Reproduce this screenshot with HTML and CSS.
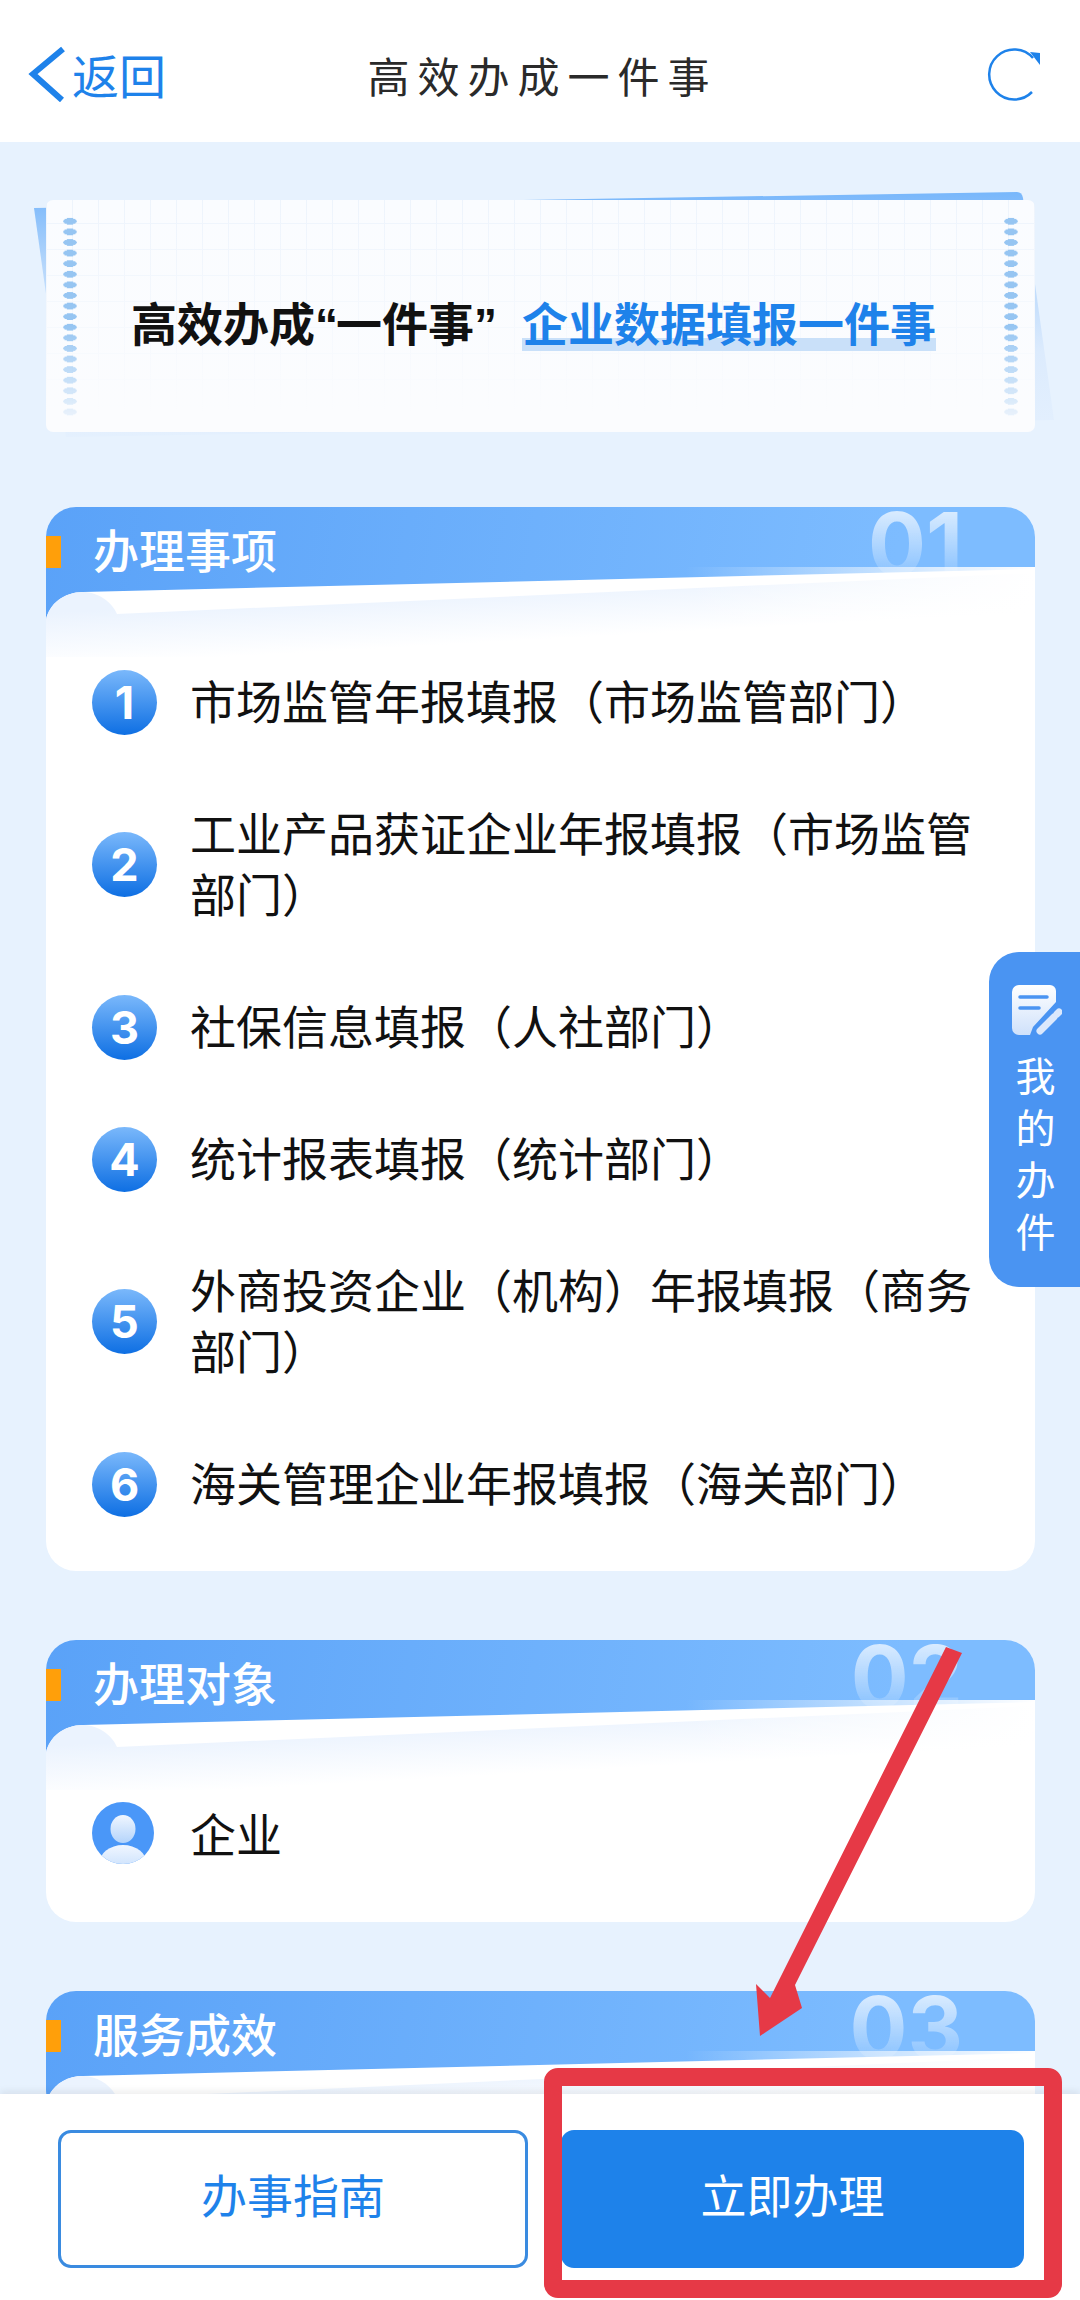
FILE: index.html
```html
<!DOCTYPE html>
<html lang="zh-CN">
<head>
    <meta charset="UTF-8">
    <meta name="viewport" content="width=device-width, initial-scale=1.0">
    <link rel="stylesheet" href="styles.css">
    <title>高效办成一件事</title>
</head>
<body>

    <svg class="sprite" aria-hidden="true">
        <defs>
            <linearGradient id="curlFade" gradientUnits="userSpaceOnUse" x1="500" y1="78" x2="503" y2="132">
                <stop offset="0" stop-color="#ebf3fe"/>
                <stop offset="1" stop-color="#fff"/>
            </linearGradient>
            <linearGradient id="curlRight" x1="0" y1="0" x2="1" y2="0">
                <stop offset="0" stop-color="#fff" stop-opacity="0"/>
                <stop offset="1" stop-color="#fff"/>
            </linearGradient>
            <symbol id="curl" viewBox="0 0 989 150" preserveAspectRatio="none">
                <path d="M0 113C3 97 18 85 37 85L989 62V150H0Z" fill="#fff"/>
                <path d="M71 107C66 95 52 85 37 85C18 85 3 97 0 113V150H989V66Z" fill="url(#curlFade)"/>
                <rect x="640" y="60" width="349" height="90" fill="url(#curlRight)"/>
            </symbol>
        </defs>
    </svg>

    <div class="page">
        <header class="topbar">
            <a class="back">
                <svg class="back-icon" viewBox="0 0 38 56"><path d="M35 3L5 28L34 54" fill="none" stroke="#1e82ea" stroke-width="6"/></svg>
                <span>返回</span>
            </a>
            <h1 class="page-title">高效办成一件事</h1>
            <svg class="refresh" viewBox="0 0 56 56">
                <path d="M47 12A25 25 0 1 0 46 46" fill="none" stroke="#1e82ea" stroke-width="2.5"/>
                <path d="M44 6L54 7V19Z" fill="#1e82ea"/>
            </svg>
        </header>

        <main class="content">
            <section class="banner">
                <svg class="banner-sheet" viewBox="0 0 1030 250">
                    <defs>
                        <linearGradient id="sheetFade" x1="0" y1="0" x2="0" y2="1">
                            <stop offset="0" stop-color="#78b7fb"/>
                            <stop offset="0.3" stop-color="#b5d6fb"/>
                            <stop offset="0.65" stop-color="#dcebfd"/>
                            <stop offset="1" stop-color="#e4f0fe"/>
                        </linearGradient>
                    </defs>
                    <path d="M2 16L985 0Q990 0 991 6L1022 228L34 245Z" fill="url(#sheetFade)"/>
                </svg>
                <div class="banner-paper">
                    <div class="holes"></div>
                    <p class="banner-text">高效办成<span class="quote">“</span>一件事<span class="quote">”</span><span class="banner-hl">企业数据填报一件事</span></p>
                    <div class="holes"></div>
                </div>
            </section>

            <section class="card">
                <div class="card-head">
                    <span class="card-no">01</span>
                    <svg class="card-curl"><use href="#curl" width="100%" height="100%"/></svg>
                    <h2 class="card-title">办理事项</h2>
                </div>
                <ol class="item-list">
                    <li class="item"><span class="badge">1</span><span class="item-text">市场监管年报填报（市场监管部门）</span></li>
                    <li class="item"><span class="badge">2</span><span class="item-text">工业产品获证企业年报填报（市场监管部门）</span></li>
                    <li class="item"><span class="badge">3</span><span class="item-text">社保信息填报（人社部门）</span></li>
                    <li class="item"><span class="badge">4</span><span class="item-text">统计报表填报（统计部门）</span></li>
                    <li class="item"><span class="badge">5</span><span class="item-text">外商投资企业（机构）年报填报（商务部门）</span></li>
                    <li class="item"><span class="badge">6</span><span class="item-text">海关管理企业年报填报（海关部门）</span></li>
                </ol>
            </section>

            <section class="card">
                <div class="card-head">
                    <span class="card-no">02</span>
                    <svg class="card-curl"><use href="#curl" width="100%" height="100%"/></svg>
                    <h2 class="card-title">办理对象</h2>
                </div>
                <div class="item-list">
                    <div class="item">
                        <svg class="person" viewBox="0 0 62 62">
                            <defs>
                                <linearGradient id="personFill" x1="0" y1="0" x2="0" y2="1">
                                    <stop offset="0" stop-color="#f0f6ff"/>
                                    <stop offset="1" stop-color="#b4d4fb"/>
                                </linearGradient>
                                <clipPath id="personClip"><circle cx="31" cy="31" r="31"/></clipPath>
                            </defs>
                            <circle cx="31" cy="31" r="31" fill="#4a97f8"/>
                            <ellipse cx="31" cy="27" rx="12.5" ry="14" fill="url(#personFill)"/>
                            <ellipse cx="31" cy="62" rx="24" ry="19" fill="url(#personFill)" clip-path="url(#personClip)"/>
                        </svg>
                        <span class="item-text">企业</span>
                    </div>
                </div>
            </section>

            <section class="card">
                <div class="card-head">
                    <span class="card-no">03</span>
                    <svg class="card-curl"><use href="#curl" width="100%" height="100%"/></svg>
                    <h2 class="card-title">服务成效</h2>
                </div>
            </section>
        </main>

        <footer class="actions">
            <button class="btn btn-guide" type="button">办事指南</button>
            <button class="btn btn-apply" type="button">立即办理</button>
        </footer>

        <aside class="side-tab">
            <svg class="side-icon" viewBox="0 0 50 50">
                <defs>
                    <linearGradient id="docFill" x1="0" y1="0" x2="0" y2="1">
                        <stop offset="0" stop-color="#fff"/>
                        <stop offset="1" stop-color="#cfe1fb"/>
                    </linearGradient>
                </defs>
                <path d="M7 0H38a6 6 0 0 1 6 6V17L21 42L18 50H7a7 7 0 0 1-7-7V7a7 7 0 0 1 7-7Z" fill="url(#docFill)"/>
                <path d="M8 12H35M8 23H27" stroke="#4a94f2" stroke-width="3.5" stroke-linecap="round"/>
                <path d="M28 46L42 32" stroke="#dbe8fc" stroke-width="7" stroke-linecap="round"/>
                <path d="M45 29L47 27" stroke="#dbe8fc" stroke-width="7" stroke-linecap="round"/>
            </svg>
            <span class="side-text">我的办件</span>
        </aside>

        <!-- red marks drawn over the screenshot -->
        <svg class="marks" viewBox="0 0 1080 2300">
            <rect x="553" y="2077" width="500" height="212" rx="5" fill="none" stroke="#e63946" stroke-width="18"/>
            <path d="M946 1647L962 1653L795 1985L802 2008L760 2036L756 1984L770 1998Z" fill="#e63946"/>
        </svg>
    </div>

</body>
</html>
```

FILE: styles.css
```css
* {
    box-sizing: border-box;
}

body {
    margin: 0;
    font-family: "Noto Sans CJK SC", "Noto Sans", sans-serif;
    color: #111;
    background-color: #e7f2fe;
}

.sprite {
    display: block;
    width: 0;
    height: 0;
}

.page {
    position: relative;
    display: flex;
    flex-direction: column;
    width: 1080px;
    height: 2300px;
    overflow: hidden;
}

/* top bar */
.topbar {
    display: grid;
    grid-template-columns: 1fr auto 1fr;
    align-items: center;
    height: 142px;
    padding: 6px 38px 0 28px;
    background-color: #fff;
}

.back {
    display: flex;
    align-items: center;
    gap: 6px;
    font-size: 47px;
    line-height: 56px;
    color: #1e82ea;
}

.back-icon {
    width: 38px;
    height: 56px;
}

.page-title {
    margin: 0;
    padding-left: 15px;
    font-size: 42px;
    font-weight: 400;
    letter-spacing: 8px;
    color: #2a2a2a;
}

.refresh {
    justify-self: end;
    width: 56px;
    height: 56px;
}

/* scrolling part */
.content {
    flex: 1;
    min-height: 0;
    overflow: hidden;
    padding: 58px 45px 0 46px;
}

/* banner */
.banner {
    position: relative;
    height: 232px;
    margin-bottom: 75px;
}

.banner-sheet {
    position: absolute;
    left: -14px;
    top: -8px;
    width: 1030px;
    height: 250px;
}

.banner-paper {
    position: relative;
    display: flex;
    justify-content: space-between;
    height: 100%;
    padding: 16px 17px;
    border-radius: 7px;
    background-color: #fafcff;
    background-image:
        linear-gradient(rgba(250, 252, 255, 0.1), #fbfcfe 92%),
        repeating-linear-gradient(90deg, #ecf3fc 0, #ecf3fc 1px, transparent 1px, transparent 26px),
        repeating-linear-gradient(0deg, #ecf3fc 0, #ecf3fc 1px, transparent 1px, transparent 26px);
}

.holes {
    flex: none;
    width: 14px;
    background-image: radial-gradient(ellipse 7px 3.4px at center, #96c5f2 92%, transparent 100%);
    background-size: 14px 10.6px;
    -webkit-mask-image: linear-gradient(#000 55%, rgba(0, 0, 0, 0.18));
    mask-image: linear-gradient(#000 55%, rgba(0, 0, 0, 0.18));
}

.banner-text {
    margin: 13px 14px 0 0;
    align-self: center;
    font-size: 46px;
    font-weight: 700;
    line-height: 66px;
    white-space: nowrap;
}

.quote {
    font-family: "Liberation Sans", sans-serif;
    letter-spacing: -2px;
}

.banner-hl {
    margin-left: 27px;
    color: #1e82ea;
    background-image: linear-gradient(#c9e0f9, #c9e0f9);
    background-repeat: no-repeat;
    background-size: 100% 13px;
    background-position: left bottom 3px;
}

/* section cards */
.card {
    margin-bottom: 69px;
    border-radius: 30px;
    overflow: hidden;
    background-color: #fff;
}

.card-head {
    position: relative;
    height: 129px;
    padding: 10px 0 0 47px;
    background-image: linear-gradient(100deg, #5aa2f8, #7dbcff 85%);
}

.card-head::before {
    content: "";
    position: absolute;
    left: 0;
    top: 29px;
    width: 15px;
    height: 32px;
    background-color: #ff9f0a;
}

.card-no {
    position: absolute;
    right: 72px;
    top: 0;
    font-family: Inter, Roboto, sans-serif;
    font-size: 86px;
    font-weight: 700;
    line-height: 74px;
    color: transparent;
    background-image: linear-gradient(rgba(255, 255, 255, 0.75), rgba(255, 255, 255, 0.15) 85%);
    -webkit-background-clip: text;
    background-clip: text;
}

.card-curl {
    position: absolute;
    left: 0;
    top: 0;
    width: 100%;
    height: 150px;
}

.card-title {
    position: relative;
    margin: 0;
    font-size: 46px;
    font-weight: 500;
    line-height: 62px;
    color: #fff;
}

.item-list {
    position: relative;
    margin: 0;
    padding: 0 40px 21px 46px;
    list-style: none;
}

.item {
    display: flex;
    align-items: center;
    gap: 33px;
    padding: 35.5px 0;
    font-size: 46px;
    line-height: 61px;
}

.item-text {
    margin: -3px 0 3px;
}

.badge {
    flex: none;
    display: flex;
    align-items: center;
    justify-content: center;
    width: 65px;
    height: 65px;
    margin: -2px 0;
    border-radius: 50%;
    font-family: Inter, Roboto, sans-serif;
    font-size: 45px;
    font-weight: 700;
    color: #fff;
    background-image: linear-gradient(#7ab8fb, #0e6fe3);
}

.person {
    flex: none;
    width: 62px;
    height: 62px;
    margin: -4px 3px 0 0;
}

/* bottom buttons */
.actions {
    position: relative;
    display: flex;
    gap: 33px;
    height: 206px;
    padding: 36px 56px 32px 58px;
    background-color: #fff;
    box-shadow: 0 -3px 7px rgba(0, 0, 0, 0.07);
}

.btn {
    height: 138px;
    padding: 0 0 12px;
    border-radius: 13px;
    font-family: inherit;
    font-size: 46px;
}

.btn-guide {
    width: 470px;
    border: 3px solid #3a8be0;
    color: #1e82ea;
    background-color: #fff;
}

.btn-apply {
    width: 463px;
    border: none;
    color: #fff;
    background-color: #1e82ea;
}

/* floating tab on the right edge */
.side-tab {
    position: absolute;
    right: 0;
    top: 952px;
    display: flex;
    flex-direction: column;
    align-items: center;
    width: 91px;
    height: 335px;
    padding: 33px 0 0 2px;
    border-radius: 30px 0 0 30px;
    color: #fff;
    background-color: #4a94f2;
}

.side-icon {
    width: 50px;
    height: 50px;
    margin-left: 2px;
}

.side-text {
    width: 40px;
    margin-top: 13px;
    font-size: 40px;
    line-height: 52px;
    text-align: center;
}

.marks {
    position: absolute;
    left: 0;
    top: 0;
    width: 1080px;
    height: 2300px;
    pointer-events: none;
}
```
